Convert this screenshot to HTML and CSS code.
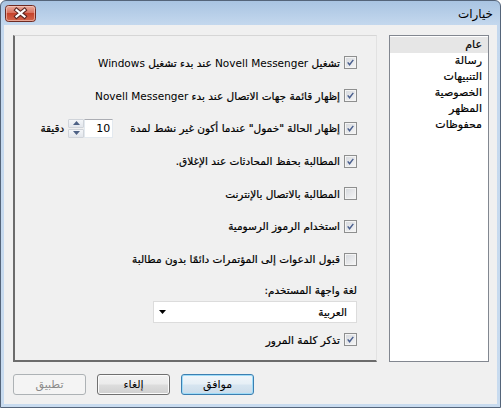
FILE: index.html
```html
<!DOCTYPE html>
<html lang="ar" dir="rtl">
<head>
<meta charset="utf-8">
<title>خيارات</title>
<link rel="stylesheet" href="styles.css">
</head>
<body>
<div class="window">
  <div class="titlebar">
    <span class="title">خيارات</span>
    <span class="close">
      <svg width="31" height="17" viewBox="0 0 31 17">
        <defs>
          <linearGradient id="cg" x1="0" y1="0" x2="0" y2="1">
            <stop offset="0" stop-color="#eab0a2"/>
            <stop offset="0.45" stop-color="#d9725f"/>
            <stop offset="0.5" stop-color="#c6432b"/>
            <stop offset="1" stop-color="#d4694f"/>
          </linearGradient>
        </defs>
        <rect x="0.5" y="0.5" width="30" height="16" rx="3" fill="url(#cg)" stroke="#6e2a22"/>
        <rect x="1.5" y="1.5" width="28" height="14" rx="2" fill="none" stroke="#f6d0c6" stroke-opacity="0.6"/>
        <path d="M11.5 5 L19.5 11.5 M19.5 5 L11.5 11.5" stroke="#5b2620" stroke-width="4.2" stroke-linecap="square"/>
        <path d="M11.5 5 L19.5 11.5 M19.5 5 L11.5 11.5" stroke="#ffffff" stroke-width="2.2" stroke-linecap="square"/>
      </svg>
    </span>
  </div>
  <div class="client">
    <div class="panes">
      <ul class="nav">
        <li class="sel">عام</li>
        <li>رسالة</li>
        <li>التنبيهات</li>
        <li>الخصوصية</li>
        <li>المظهر</li>
        <li>محفوظات</li>
      </ul>
      <div class="panel">
        <div class="row"><span class="cb on"><svg viewBox="0 0 13 13"><path d="M3.2 6.4 L5.4 9.2 L9.8 3.4"/></svg></span><span class="lbl">تشغيل <span class="lat">Novell Messenger</span> عند بدء تشغيل <span class="lat">Windows</span></span></div>
        <div class="row"><span class="cb on"><svg viewBox="0 0 13 13"><path d="M3.2 6.4 L5.4 9.2 L9.8 3.4"/></svg></span><span class="lbl">إظهار قائمة جهات الاتصال عند بدء <span class="lat">Novell Messenger</span></span></div>
        <div class="row"><span class="cb on"><svg viewBox="0 0 13 13"><path d="M3.2 6.4 L5.4 9.2 L9.8 3.4"/></svg></span><span class="lbl">إظهار الحالة "خمول" عندما أكون غير نشط لمدة</span>
          <span class="field">10</span>
          <span class="spin">
            <span class="sbtn"><svg width="7" height="4" viewBox="0 0 7 4"><path d="M0 4 L3.5 0 L7 4 Z"/></svg></span>
            <span class="sbtn"><svg width="7" height="4" viewBox="0 0 7 4"><path d="M0 0 L7 0 L3.5 4 Z"/></svg></span>
          </span>
          <span class="unit">دقيقة</span>
        </div>
        <div class="row"><span class="cb on"><svg viewBox="0 0 13 13"><path d="M3.2 6.4 L5.4 9.2 L9.8 3.4"/></svg></span><span class="lbl">المطالبة بحفظ المحادثات عند الإغلاق.</span></div>
        <div class="row"><span class="cb"></span><span class="lbl">المطالبة بالاتصال بالإنترنت</span></div>
        <div class="row"><span class="cb on"><svg viewBox="0 0 13 13"><path d="M3.2 6.4 L5.4 9.2 L9.8 3.4"/></svg></span><span class="lbl">استخدام الرموز الرسومية</span></div>
        <div class="row"><span class="cb"></span><span class="lbl">قبول الدعوات إلى المؤتمرات دائمًا بدون مطالبة</span></div>
        <div class="langlabel">لغة واجهة المستخدم:</div>
        <div class="combo"><span>العربية</span><svg width="7" height="4" viewBox="0 0 7 4"><path d="M0 0 L7 0 L3.5 4 Z"/></svg></div>
        <div class="row last"><span class="cb on"><svg viewBox="0 0 13 13"><path d="M3.2 6.4 L5.4 9.2 L9.8 3.4"/></svg></span><span class="lbl">تذكر كلمة المرور</span></div>
      </div>
    </div>
    <div class="buttons">
      <span class="btn default">موافق</span>
      <span class="btn">إلغاء</span>
      <span class="btn disabled">تطبيق</span>
    </div>
  </div>
</div>
</body>
</html>
```
FILE: styles.css
```css
* { box-sizing: border-box; }
html, body { margin: 0; padding: 0; }
body {
  width: 501px;
  height: 408px;
  overflow: hidden;
  font-family: "DejaVu Sans", sans-serif;
  font-size: 11px;
  color: #000;
  background: #fff;
}
.window {
  width: 501px;
  height: 408px;
  border: 1px solid #55657a;
  border-radius: 6px 6px 0 0;
  background: linear-gradient(#a9c4e2, #c4d8ee 24px, #c8dbef);
  padding: 0 3px 3px 3px;
  display: flex;
  flex-direction: column;
}
.titlebar {
  height: 24px;
  flex: none;
  display: flex;
  align-items: center;
  justify-content: space-between;
  padding: 0 4px 0 1px;
}
.title {
  font-size: 12px;
  line-height: 14px;
  margin-top: 1px;
}
.close {
  align-self: flex-start;
  margin-top: 4px;
  height: 17px;
  display: block;
}
.close svg { display: block; }
.client {
  flex: 1;
  background: #f0f0f0;
  padding: 10px 8px 0 9px;
  display: flex;
  flex-direction: column;
}
.panes {
  display: flex;
  gap: 12px;
  height: 327px;
  flex: none;
}
.nav {
  list-style: none;
  margin: 0;
  padding: 1px 0 0 0;
  width: 100px;
  height: 327px;
  background: #fff;
  border: 1px solid #828790;
  flex: none;
  -webkit-text-stroke: 0.2px #000;
}
.nav li {
  height: 16px;
  line-height: 16px;
  padding-right: 6px;
  white-space: nowrap;
}
.nav li.sel { background: #e6e6e6; }
.panel {
  width: 364px;
  height: 327px;
  flex: none;
  font-size: 10.5px;
  border-top: 1px solid #d6d6d6;
  border-right: 1px solid #e2e2e2;
  border-left: 2px solid #6c6c6c;
  border-bottom: 2px solid #6c6c6c;
  padding: 10.65px 19px 0 0;
  -webkit-text-stroke: 0.2px #000;
}
.lat { -webkit-text-stroke: 0; }
.row {
  display: flex;
  align-items: center;
  gap: 4px;
  height: 32.7px;
  white-space: nowrap;
}
.cb {
  width: 13px;
  height: 13px;
  flex: none;
  border: 1px solid #8e8f8f;
  background: linear-gradient(135deg, #d4d7dc, #f7f7f7);
  box-shadow: inset 0 0 0 1px #f4f4f4;
  display: block;
}
.cb svg {
  display: block;
  width: 11px;
  height: 11px;
  margin: 0;
}
.cb svg path {
  fill: none;
  stroke: #4a5f8e;
  stroke-width: 1.7;
}
.field {
  width: 29px;
  height: 19px;
  flex: none;
  background: #fff;
  border: 1px solid #e3e9ef;
  border-top-color: #abadb3;
  text-align: right;
  padding-right: 2px;
  line-height: 17px;
  font-size: 11px;
  margin-right: 13px;
  direction: ltr;
  -webkit-text-stroke: 0;
}
.spin {
  width: 16px;
  height: 19px;
  flex: none;
  display: flex;
  flex-direction: column;
  gap: 1px;
  margin-right: -4px;
}
.sbtn {
  flex: 1;
  display: flex;
  align-items: center;
  justify-content: center;
  border: 1px solid #d0d4da;
  border-radius: 1px;
  background: linear-gradient(#f4f6f9, #e2e6ec);
}
.sbtn svg { display: block; }
.sbtn svg path { fill: #4d6185; }
.langlabel {
  line-height: 14px;
  margin-top: 8px;
}
.combo {
  width: 204px;
  height: 22px;
  margin-top: 3.5px;
  background: #fff;
  border: 1px solid #dcdcdc;
  display: flex;
  align-items: center;
  justify-content: space-between;
  padding: 0 9px 0 5px;
}
.combo svg { display: block; }
.combo svg path { fill: #000; }
.row.last {
  height: 17px;
  margin-top: 8.5px;
}
.buttons {
  display: flex;
  justify-content: flex-end;
  gap: 11px;
  margin-top: 12px;
}
.btn {
  width: 73px;
  height: 21px;
  border: 1px solid #707070;
  border-radius: 3px;
  background: linear-gradient(#f2f2f2 0%, #ebebeb 48%, #dddddd 52%, #cfcfcf 100%);
  box-shadow: inset 0 0 0 1px #fbfbfb;
  display: flex;
  align-items: center;
  justify-content: center;
}
.btn.default {
  border-color: #3c7fb1;
  background: linear-gradient(#f1f6fa 0%, #e6eff6 48%, #d7e5f0 52%, #cbdcea 100%);
  box-shadow: inset 0 0 0 1px #9fdcf8;
}
.btn.disabled {
  border-color: #adb2b5;
  background: #f4f4f4;
  box-shadow: none;
  color: #8a8a8a;
}
```
